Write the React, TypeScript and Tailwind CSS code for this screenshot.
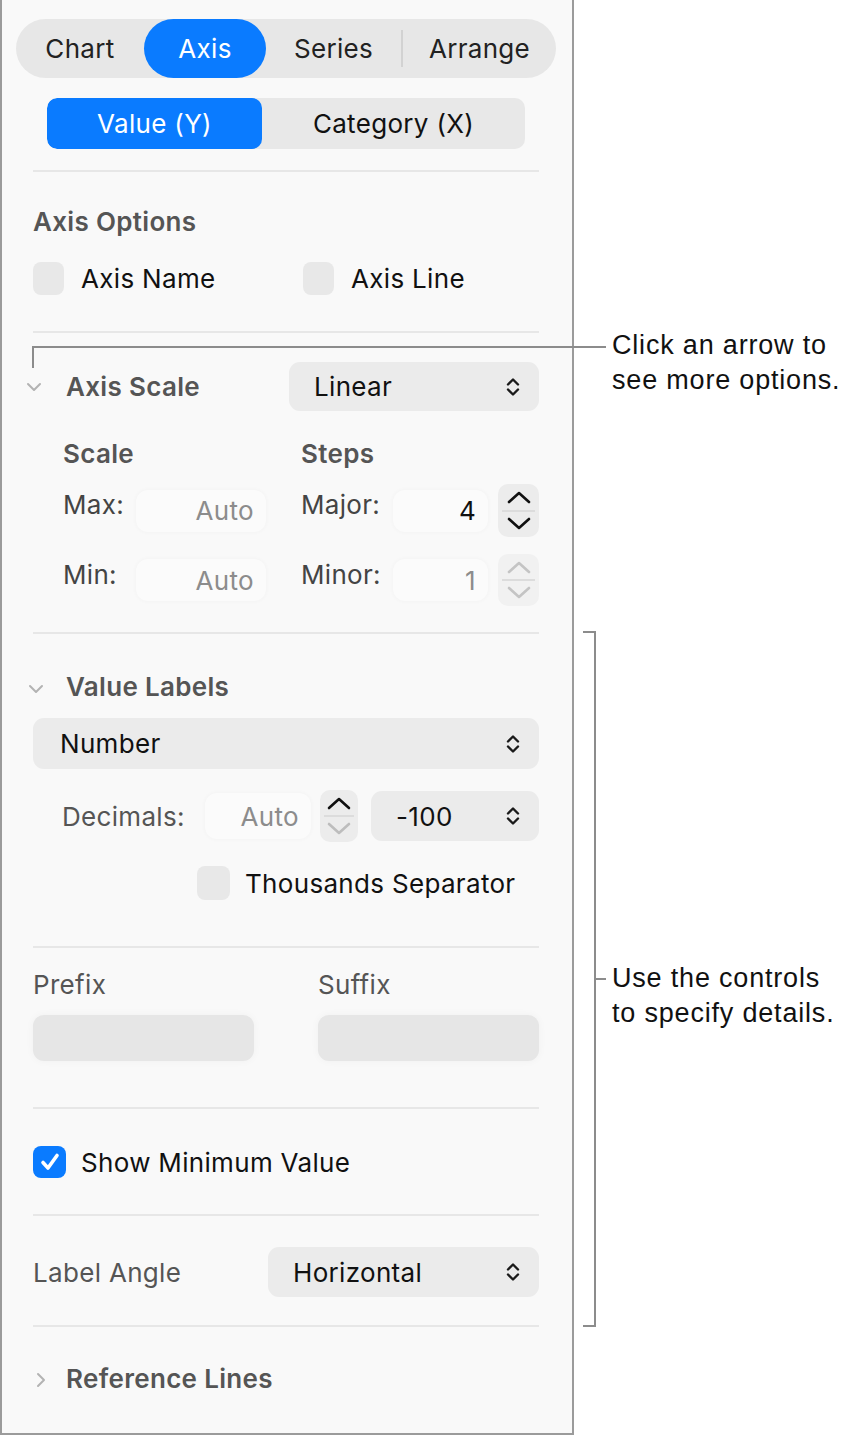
import React from "react";

const sf = "font-['Inter','Noto_Sans',sans-serif] tracking-[0.02em]";

function UpDown() {
  return (
    <svg width="16" height="24" viewBox="0 0 16 24" fill="none" className="shrink-0">
      <path d="M3 9.5 L8 4.5 L13 9.5" stroke="#1a1a1a" strokeWidth="2.4" strokeLinecap="round" strokeLinejoin="round" />
      <path d="M3 14.5 L8 19.5 L13 14.5" stroke="#1a1a1a" strokeWidth="2.4" strokeLinecap="round" strokeLinejoin="round" />
    </svg>
  );
}

function Popup({ label, className }: { label: string; className: string }) {
  return (
    <div className={`flex items-center justify-between rounded-[11px] bg-[#ebebeb] pl-[25px] pr-[18px] ${className}`}>
      <span className="text-[26px] text-[#111]">{label}</span>
      <UpDown />
    </div>
  );
}

function Stepper({ up, down, className }: { up: string; down: string; className: string }) {
  return (
    <div className={`flex flex-col items-center rounded-[10px] bg-[#ececec] ${className}`}>
      <div className="flex flex-1 items-center justify-center pt-[2px]">
        <svg width="26" height="15" viewBox="0 0 26 15" fill="none">
          <path d="M3 12 L13 3 L23 12" stroke={up} strokeWidth="2.6" strokeLinecap="round" strokeLinejoin="round" />
        </svg>
      </div>
      <div className="h-[2px] w-[80%] bg-[#dcdcdc]" />
      <div className="flex flex-1 items-center justify-center pb-[2px]">
        <svg width="26" height="15" viewBox="0 0 26 15" fill="none">
          <path d="M3 3 L13 12 L23 3" stroke={down} strokeWidth="2.6" strokeLinecap="round" strokeLinejoin="round" />
        </svg>
      </div>
    </div>
  );
}

function Field({ value, muted, className }: { value: string; muted?: boolean; className: string }) {
  return (
    <div
      className={`flex items-center justify-end rounded-[12px] bg-[#fbfbfb] pr-[12px] shadow-[0_0_5px_rgba(0,0,0,0.035)] ${className}`}
    >
      <span className={`text-[26px] ${muted ? "text-[#8c8c8c]" : "text-[#111]"}`}>{value}</span>
    </div>
  );
}

function Check({ on, className }: { on?: boolean; className: string }) {
  return (
    <div className={`flex items-center justify-center rounded-[8px] ${on ? "bg-[#0a7bff]" : "bg-[#e8e8e8]"} ${className}`}>
      {on && (
        <svg width="24" height="24" viewBox="0 0 24 24" fill="none">
          <path d="M5 12.5 L10 18 L19 5.5" stroke="white" strokeWidth="3.6" strokeLinecap="round" strokeLinejoin="round" />
        </svg>
      )}
    </div>
  );
}

function Disclosure({ open }: { open: boolean }) {
  return open ? (
    <svg width="18" height="12" viewBox="0 0 18 12" fill="none">
      <path d="M3 3 L9 9 L15 3" stroke="#b3b3b3" strokeWidth="2" strokeLinecap="round" strokeLinejoin="round" />
    </svg>
  ) : (
    <svg width="12" height="18" viewBox="0 0 12 18" fill="none">
      <path d="M3 3 L9 9 L3 15" stroke="#b3b3b3" strokeWidth="2" strokeLinecap="round" strokeLinejoin="round" />
    </svg>
  );
}

const Divider = ({ mt }: { mt: string }) => <div className={`h-[2px] w-[506px] bg-[#e7e7e7] ${mt}`} />;

const callout = "absolute font-['Liberation_Sans',Arial,sans-serif] text-[27px] leading-[35px] tracking-[0.03em] text-[#111]";

export default function App() {
  return (
    <div className="relative h-[1436px] w-[854px] overflow-hidden bg-white">
      {/* Inspector panel */}
      <div className={`h-[1435px] w-[574px] border-x-2 border-b-2 border-[#9b9b9b] bg-[#f9f9f9] pt-[19px] ${sf} text-[#111]`}>
        {/* Top tabs */}
        <div className="ml-[14px] flex h-[59px] w-[540px] items-center rounded-full bg-[#e7e7e7] text-[26px] text-[#222]">
          <div className="flex w-[128px] justify-center">Chart</div>
          <div className="flex h-full w-[122px] items-center justify-center rounded-full bg-[#0a7bff] text-white">Axis</div>
          <div className="flex w-[135px] justify-center">Series</div>
          <div className="h-[37px] w-[2px] bg-[#d2d2d2]" />
          <div className="flex w-[153px] justify-center">Arrange</div>
        </div>

        {/* Value / Category */}
        <div className="ml-[45px] mt-[20px] flex h-[51px] w-[478px] overflow-hidden rounded-[10px] bg-[#e8e8e8] text-[26px]">
          <div className="flex w-[215px] items-center justify-center rounded-[10px] bg-[#0a7bff] text-white">Value (Y)</div>
          <div className="flex flex-1 items-center justify-center text-[#111]">Category (X)</div>
        </div>

        <div className="pl-[31px]">
          <Divider mt="mt-[21px]" />

          {/* Axis Options */}
          <div className="mt-[34px] h-[32px] text-[26px] font-semibold leading-[32px] text-[#555]">Axis Options</div>
          <div className="mt-[24px] flex h-[33px] items-center text-[26px]">
            <Check className="h-[33px] w-[31px]" />
            <span className="ml-[17px] w-[222px]">Axis Name</span>
            <Check className="h-[33px] w-[31px]" />
            <span className="ml-[17px]">Axis Line</span>
          </div>

          <Divider mt="mt-[36px]" />

          {/* Axis Scale */}
          <div className="mt-[29px] flex h-[49px] w-[506px] items-center">
            <div className="-ml-[8px] w-[41px]">
              <Disclosure open />
            </div>
            <span className="w-[223px] text-[26px] font-semibold text-[#555]">Axis Scale</span>
            <Popup label="Linear" className="h-[49px] w-[250px]" />
          </div>

          <div className="ml-[30px] mt-[27px] flex h-[32px] text-[26px] font-semibold leading-[32px] text-[#555]">
            <span className="w-[238px]">Scale</span>
            <span>Steps</span>
          </div>

          <div className="ml-[30px] mt-[14px] flex h-[53px] items-center text-[26px] text-[#444]">
            <span className="-mt-[12px] w-[73px]">Max:</span>
            <Field value="Auto" muted className="h-[42px] w-[130px]" />
            <span className="-mt-[12px] ml-[35px] w-[92px]">Major:</span>
            <Field value="4" className="h-[42px] w-[95px]" />
            <Stepper up="#111" down="#111" className="ml-[10px] h-[53px] w-[41px]" />
          </div>

          <div className="ml-[30px] mt-[17px] flex h-[52px] items-center text-[26px] text-[#444]">
            <span className="-mt-[12px] w-[73px]">Min:</span>
            <Field value="Auto" muted className="h-[42px] w-[130px]" />
            <span className="-mt-[12px] ml-[35px] w-[92px]">Minor:</span>
            <Field value="1" muted className="h-[42px] w-[95px]" />
            <Stepper up="#c4c4c4" down="#c4c4c4" className="ml-[10px] h-[52px] w-[41px] bg-[#f1f1f1]" />
          </div>

          <Divider mt="mt-[26px]" />

          {/* Value Labels */}
          <div className="mt-[36px] flex h-[32px] items-center">
            <div className="-ml-[6px] w-[39px] pt-[6px]">
              <Disclosure open />
            </div>
            <span className="text-[26px] font-semibold text-[#555]">Value Labels</span>
          </div>

          <Popup label="Number" className="mt-[16px] h-[51px] w-[506px] !pl-[27px]" />

          <div className="mt-[21px] flex h-[52px] items-center">
            <span className="ml-[29px] w-[143px] text-[26px] text-[#555]">Decimals:</span>
            <Field value="Auto" muted className="h-[46px] w-[106px]" />
            <Stepper up="#111" down="#bdbdbd" className="ml-[9px] h-[52px] w-[38px]" />
            <Popup label="-100" className="ml-[13px] h-[50px] w-[168px]" />
          </div>

          <div className="ml-[164px] mt-[24px] flex h-[34px] items-center text-[26px]">
            <Check className="h-[34px] w-[33px]" />
            <span className="ml-[15px]">Thousands Separator</span>
          </div>

          <Divider mt="mt-[46px]" />

          {/* Prefix / Suffix */}
          <div className="mt-[21px] flex h-[32px] text-[26px] leading-[32px] text-[#555]">
            <span className="w-[285px]">Prefix</span>
            <span>Suffix</span>
          </div>
          <div className="mt-[14px] flex h-[46px]">
            <div className="h-[46px] w-[221px] rounded-[11px] bg-[#e6e6e6] shadow-[0_0_8px_rgba(0,0,0,0.04)]" />
            <div className="ml-[64px] h-[46px] w-[221px] rounded-[11px] bg-[#e6e6e6] shadow-[0_0_8px_rgba(0,0,0,0.04)]" />
          </div>

          <Divider mt="mt-[46px]" />

          <div className="mt-[37px] flex h-[32px] items-center text-[26px]">
            <Check on className="h-[32px] w-[33px]" />
            <span className="ml-[15px]">Show Minimum Value</span>
          </div>

          <Divider mt="mt-[36px]" />

          <div className="mt-[31px] flex h-[50px] w-[506px] items-center">
            <span className="w-[235px] text-[26px] text-[#555]">Label Angle</span>
            <Popup label="Horizontal" className="h-[50px] w-[271px]" />
          </div>

          <Divider mt="mt-[28px]" />

          <div className="mt-[35px] flex h-[32px] items-center">
            <div className="w-[33px] pl-[2px] pt-[4px]">
              <Disclosure open={false} />
            </div>
            <span className="text-[26px] font-semibold text-[#555]">Reference Lines</span>
          </div>
        </div>
      </div>

      {/* Callout: arrow */}
      <div className="absolute left-[32px] top-[346px] h-[2px] w-[574px] bg-[#8c8c8c]" />
      <div className="absolute left-[32px] top-[346px] h-[22px] w-[2px] bg-[#8c8c8c]" />
      <div className={`${callout} left-[612px] top-[328px]`}>
        Click an arrow to
        <br />
        see more options.
      </div>

      {/* Callout: bracket */}
      <div className="absolute left-[594px] top-[631px] h-[696px] w-[2px] bg-[#8c8c8c]" />
      <div className="absolute left-[583px] top-[631px] h-[2px] w-[12px] bg-[#8c8c8c]" />
      <div className="absolute left-[583px] top-[1325px] h-[2px] w-[12px] bg-[#8c8c8c]" />
      <div className="absolute left-[594px] top-[978px] h-[2px] w-[12px] bg-[#8c8c8c]" />
      <div className={`${callout} left-[612px] top-[961px]`}>
        Use the controls
        <br />
        to specify details.
      </div>
    </div>
  );
}
